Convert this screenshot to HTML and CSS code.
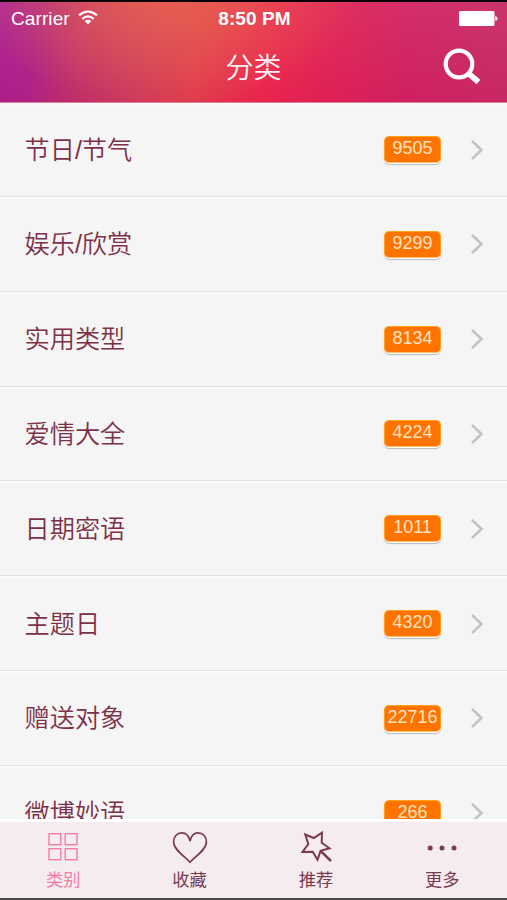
FILE: index.html
```html
<!DOCTYPE html>
<html lang="zh-CN">
<head>
<meta charset="utf-8">
<title>分类</title>
<link rel="stylesheet" href="styles.css">
</head>
<body>
<div class="app">
  <header class="header">
    <div class="status">
      <div class="carrier"><span>Carrier</span>
        <svg class="wifi" viewBox="0 0 20 15" width="20" height="15"><g fill="none" stroke="#fff" stroke-width="2.1"><path d="M1 5.4Q10-2.4 19 5.4"/><path d="M4.3 8.9Q10 3.7 15.7 8.9"/></g><path d="M6.7 11.1Q10 8.3 13.3 11.1L10 14.5Z" fill="#fff"/></svg>
      </div>
      <div class="time">8:50 PM</div>
      <svg class="battery" viewBox="0 0 39 15" width="39" height="15" fill="#fff"><rect width="35.5" height="15" rx="1.5"/><path d="M36.3 5Q38.6 5.5 38.6 7.5T36.3 10Z"/></svg>
    </div>
    <div class="titlebar">
      <h1>分类</h1>
      <svg class="search" viewBox="0 0 40 38" width="40" height="38" fill="none" stroke="#fff"><circle cx="17" cy="17" r="13.3" stroke-width="4.2"/><path d="M26 26L36.5 35" stroke-width="5.6"/></svg>
    </div>
  </header>
  <ul class="list">
    <li class="row"><span class="name">节日/节气</span><span class="badge">9505</span><svg class="chevron" viewBox="0 0 14 22"><path d="M2 2L11.5 11L2 20"/></svg></li>
    <li class="row"><span class="name">娱乐/欣赏</span><span class="badge">9299</span><svg class="chevron" viewBox="0 0 14 22"><path d="M2 2L11.5 11L2 20"/></svg></li>
    <li class="row"><span class="name">实用类型</span><span class="badge">8134</span><svg class="chevron" viewBox="0 0 14 22"><path d="M2 2L11.5 11L2 20"/></svg></li>
    <li class="row"><span class="name">爱情大全</span><span class="badge">4224</span><svg class="chevron" viewBox="0 0 14 22"><path d="M2 2L11.5 11L2 20"/></svg></li>
    <li class="row"><span class="name">日期密语</span><span class="badge">1011</span><svg class="chevron" viewBox="0 0 14 22"><path d="M2 2L11.5 11L2 20"/></svg></li>
    <li class="row"><span class="name">主题日</span><span class="badge">4320</span><svg class="chevron" viewBox="0 0 14 22"><path d="M2 2L11.5 11L2 20"/></svg></li>
    <li class="row"><span class="name">赠送对象</span><span class="badge">22716</span><svg class="chevron" viewBox="0 0 14 22"><path d="M2 2L11.5 11L2 20"/></svg></li>
    <li class="row"><span class="name">微博妙语</span><span class="badge">266</span><svg class="chevron" viewBox="0 0 14 22"><path d="M2 2L11.5 11L2 20"/></svg></li>
  </ul>
  <nav class="tabs">
    <div class="tab active"><svg viewBox="0 0 36 34" stroke-width="1.4"><rect x="4" y="3.7" width="11.8" height="11"/><rect x="20.2" y="3.7" width="11.8" height="11"/><rect x="4" y="18.7" width="11.8" height="11"/><rect x="20.2" y="18.7" width="11.8" height="11"/></svg><span>类别</span></div>
    <div class="tab"><svg viewBox="0 0 36 34" stroke-width="1.7"><path d="M18 11C16.6 5 13.6 2.9 10 2.9C4.8 2.9 1.6 6.8 1.6 11.8C1.6 20 13 26.5 18 32.3C23 26.5 34.4 20 34.4 11.8C34.4 6.8 31.2 2.9 26 2.9C22.4 2.9 19.4 5 18 11Z"/></svg><span>收藏</span></div>
    <div class="tab"><svg viewBox="0 0 36 34" stroke-width="2"><path d="M7.3 4.5L15.7 8L24 2.6L23.7 12.8L31.5 18.3L22.6 20.8L19.5 29.7L14.7 21.8L4.5 21.9L10.3 14Z"/><path d="M22.6 20.8L33 31" stroke-width="2.5"/></svg><span>推荐</span></div>
    <div class="tab"><svg viewBox="0 0 36 34"><g class="dots"><circle cx="6.2" cy="18" r="2.5"/><circle cx="18" cy="18" r="2.5"/><circle cx="30" cy="18" r="2.5"/></g></svg><span>更多</span></div>
  </nav>
</div>
</body>
</html>
```
FILE: styles.css
```css
* { box-sizing: border-box; }
body { margin: 0; font-family: "Liberation Sans", "Noto Sans CJK SC", sans-serif; }
.app { width: 507px; height: 900px; display: flex; flex-direction: column; overflow: hidden; background: #f5f5f5; }
.header {
  height: 103px; flex: none; border-top: 2px solid #090006; color: #fff;
  border-bottom: 1px solid #d98098;
  background:
    radial-gradient(ellipse 190px 110px at 165px -5px, rgba(234,100,76,.8), rgba(226,84,80,0)),
    linear-gradient(180deg, rgba(225,110,130,.14), rgba(215,0,55,.12)),
    linear-gradient(97deg, #a8209a 0, #a82490 7%, #bd356f 17%, #cc4062 28%, #e0434f 39%, #ec2850 53%, #df2458 66%, #cf2466 80%, #c52d68 100%);
}
.status { height: 33px; padding: 0 9px 0 11px; display: grid; grid-template-columns: 1fr auto 1fr; align-items: center; font-size: 19px; }
.carrier { display: flex; align-items: center; gap: 8px; }
.carrier span { letter-spacing: .1px; }
.wifi { margin-top: -2px; }
.time { font-weight: bold; letter-spacing: .1px; }
.battery { justify-self: end; }
.titlebar { height: 62px; display: grid; grid-template-columns: 1fr auto 1fr; align-items: center; padding: 0 25px; }
h1 { grid-column: 2; margin: 0; font-family: "Noto Sans CJK SC", sans-serif; font-size: 28px; line-height: 40px; font-weight: 350; color: #fff0f3; }
.search { justify-self: end; }
.list { list-style: none; margin: 0; padding: 0; flex: 1; min-height: 0; overflow: hidden; }
.row { height: 94.8px; display: flex; align-items: center; padding: 1px 23px 0 24.5px; border-bottom: 1px solid #e3e3e3; box-shadow: inset 0 2px #fafafa; }
.row:first-child { height: 94px; padding-top: 0; }
.name { flex: 1; font-size: 25.2px; line-height: 36px; font-weight: 350; color: #7d3148; }
.badge { width: 57px; height: 27px; margin-right: 29px; border: 1.5px solid #ffa21a; border-bottom-color: #ffbd65; border-radius: 5px; background: #ff7300; color: #ffe2c0; font-size: 18px; line-height: 23px; text-align: center; box-shadow: 0 1px #fff, 0 2px 1px #bbb; }
.chevron { width: 14px; height: 22px; fill: none; stroke: #c2c2c2; stroke-width: 2.5; }
.tabs { height: 81px; flex: none; display: grid; grid-template-columns: repeat(4, 126.4px); background: #f5ecef; border-top: 3px solid #fff; border-bottom: 2px solid #4d484a; color: #7c3a50; }
.tab { display: flex; flex-direction: column; align-items: center; padding-top: 8px; }
.tab svg { width: 36px; height: 34px; fill: none; stroke: currentColor; }
.tab .dots { fill: currentColor; stroke: none; }
.tab span { font-size: 17.3px; line-height: 25px; margin-top: 4px; }
.active { color: #f47da5; }
```
